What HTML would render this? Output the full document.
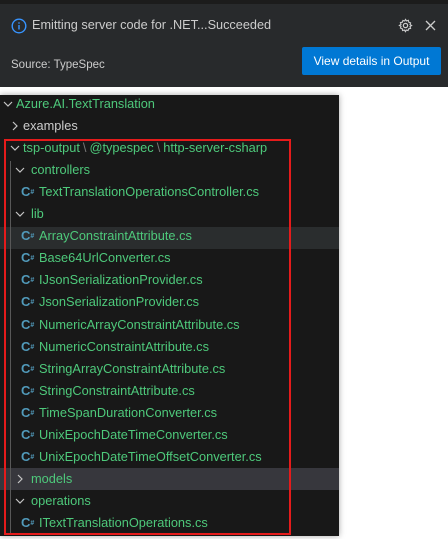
<!DOCTYPE html>
<html><head><meta charset="utf-8"><style>
*{margin:0;padding:0;box-sizing:border-box}
body{width:448px;height:539px;background:#fff;position:relative;overflow:hidden;font-family:"Liberation Sans",sans-serif}
.top{position:absolute;left:0;top:0;width:448px;height:4px;background:#1c1c1c}
.notif{position:absolute;left:0;top:4px;width:448px;height:83px;background:#282a2c;color:#cccccc}
.title{position:absolute;left:32px;top:14px;font-size:12.7px;white-space:nowrap}
.src{position:absolute;left:11px;top:55px;font-size:11.5px}
.btn{position:absolute;left:302px;top:43px;width:139px;height:28px;background:#0078d4;color:#fff;font-size:12px;text-align:center;line-height:28px;border-radius:2px}
.exp{position:absolute;left:0;top:95px;width:339px;height:441px;background:#181818;box-shadow:0 0 6px rgba(0,0,0,.35)}
.row{position:absolute;left:0;width:339px;height:22px;line-height:22px;font-size:12.8px;color:#4ec97b;white-space:nowrap}
.row span.t{position:absolute}
.chev{position:absolute;top:0;color:#c5c5c5}
.c{position:absolute;top:0;color:#519aba;font-weight:bold;font-size:13px}
.sep{color:#777;margin:0 3px}
.red{position:absolute;left:4px;top:139px;width:287px;height:396px;border:2px solid #e51b1b}
.guide{position:absolute;left:10px;top:161px;width:1px;height:372px;background:#585858}
</style></head><body>
<div class="top"></div>
<div class="notif">
<svg style="position:absolute;left:11px;top:14px" width="16" height="16" viewBox="0 0 16 16"><circle cx="8" cy="8" r="6.8" fill="none" stroke="#3794ff" stroke-width="1.4"/><rect x="7.3" y="7" width="1.4" height="4.5" fill="#3794ff"/><rect x="7.3" y="4.3" width="1.4" height="1.4" fill="#3794ff"/></svg>
<div class="title">Emitting server code for .NET...Succeeded</div>
<svg style="position:absolute;left:398px;top:14px" width="15" height="15" viewBox="0 0 16 16"><circle cx="8" cy="8" r="2.3" fill="none" stroke="#ccc" stroke-width="1.3"/><path d="M8 1.5l1.2 1.6 1.9-.6.4 2 1.9.7-.6 1.9L14.5 8l-1.7 1.2.6 1.9-2 .4-.7 1.9-1.9-.6L8 14.5l-1.2-1.7-1.9.6-.4-2-1.9-.7.6-1.9L1.5 8l1.7-1.2-.6-1.9 2-.4.7-1.9 1.9.6z" fill="none" stroke="#ccc" stroke-width="1.2"/></svg>
<svg style="position:absolute;left:425px;top:16px" width="11" height="11" viewBox="0 0 11 11"><path d="M1 1L10 10M10 1L1 10" stroke="#ccc" stroke-width="1.3"/></svg>
<div class="src">Source: TypeSpec</div>
<div class="btn">View details in Output</div>
</div>
<div class="exp"></div>
<div style="position:absolute;left:0;top:227px;width:339px;height:22px;background:#2a2d2e"></div>
<div style="position:absolute;left:0;top:468px;width:339px;height:22px;background:#37373d"></div>
<div class="guide"></div>
<div class="red"></div>
<div id="tree"></div>
<script>
var rows=[
[0,'v','Azure.AI.TextTranslation'],
[1,'>','examples','#cccccc'],
[1,'v','tsp-output<span class="sep">\\</span>@typespec<span class="sep">\\</span>http-server-csharp'],
[2,'v','controllers'],
[3,'c','TextTranslationOperationsController.cs'],
[2,'v','lib'],
[3,'c','ArrayConstraintAttribute.cs'],
[3,'c','Base64UrlConverter.cs'],
[3,'c','IJsonSerializationProvider.cs'],
[3,'c','JsonSerializationProvider.cs'],
[3,'c','NumericArrayConstraintAttribute.cs'],
[3,'c','NumericConstraintAttribute.cs'],
[3,'c','StringArrayConstraintAttribute.cs'],
[3,'c','StringConstraintAttribute.cs'],
[3,'c','TimeSpanDurationConverter.cs'],
[3,'c','UnixEpochDateTimeConverter.cs'],
[3,'c','UnixEpochDateTimeOffsetConverter.cs'],
[2,'>','models'],
[2,'v','operations'],
[3,'c','ITextTranslationOperations.cs']];
var h='';
var chx=[3,10,15],tx=[16,23,31,39];
rows.forEach(function(r,i){
 var y=93+i*22.05;
 var s='<div class="row" style="top:'+y+'px">';
 if(r[1]=='v') s+='<svg class="chev" style="left:'+chx[r[0]]+'px;top:7px" width="10" height="8" viewBox="0 0 10 8"><path d="M1 2l4 4 4-4" fill="none" stroke="#c5c5c5" stroke-width="1.2"/></svg>';
 else if(r[1]=='>') s+='<svg class="chev" style="left:'+(chx[r[0]]+1)+'px;top:6px" width="8" height="10" viewBox="0 0 8 10"><path d="M2 1l4 4-4 4" fill="none" stroke="#c5c5c5" stroke-width="1.2"/></svg>';
 else s+='<span class="c" style="left:21px">C<span style="font-size:7px;vertical-align:2px">#</span></span>';
 s+='<span class="t" style="left:'+tx[r[0]]+'px'+(r[3]?';color:'+r[3]:'')+'">'+r[2]+'</span></div>';
 h+=s;});
document.getElementById('tree').innerHTML=h;
</script>
</body></html>
